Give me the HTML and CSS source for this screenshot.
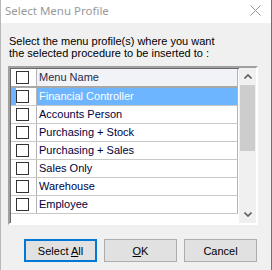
FILE: index.html
```html
<!DOCTYPE html>
<html>
<head>
<meta charset="utf-8">
<link rel="stylesheet" href="styles.css">
</head>
<body>
<div class="win">
  <div class="titlebar">
    <span class="title">Select Menu Profile</span>
    <svg class="close" width="11" height="11" viewBox="0 0 11 11"><path d="M0.5 0.5 L10.5 10.5 M10.5 0.5 L0.5 10.5" stroke="#999" stroke-width="1" fill="none"/></svg>
  </div>
  <div class="content">
    <p class="prompt">Select the menu profile(s) where you want<br>the selected procedure to be inserted to :</p>
    <div class="grid">
      <div class="table">
        <div class="row head"><div class="cbcell"><span class="cb"></span></div><div class="name">Menu Name</div></div>
        <div class="row sel"><div class="cbcell"><span class="cb"></span></div><div class="name">Financial Controller</div></div>
        <div class="row"><div class="cbcell"><span class="cb"></span></div><div class="name">Accounts Person</div></div>
        <div class="row"><div class="cbcell"><span class="cb"></span></div><div class="name">Purchasing + Stock</div></div>
        <div class="row"><div class="cbcell"><span class="cb"></span></div><div class="name">Purchasing + Sales</div></div>
        <div class="row"><div class="cbcell"><span class="cb"></span></div><div class="name">Sales Only</div></div>
        <div class="row"><div class="cbcell"><span class="cb"></span></div><div class="name">Warehouse</div></div>
        <div class="row"><div class="cbcell"><span class="cb"></span></div><div class="name">Employee</div></div>
      </div>
      <div class="scrollbar">
        <div class="arrow"><svg width="8" height="5" viewBox="0 0 8 5"><path d="M0.5 4.5 L4 1 L7.5 4.5" stroke="#606060" stroke-width="1.6" fill="none"/></svg></div>
        <div class="track"><div class="thumb"></div></div>
        <div class="arrow"><svg width="8" height="5" viewBox="0 0 8 5"><path d="M0.5 0.5 L4 4 L7.5 0.5" stroke="#606060" stroke-width="1.6" fill="none"/></svg></div>
      </div>
    </div>
    <div class="buttons">
      <button class="btn focus">Select <u>A</u>ll</button>
      <button class="btn"><u>O</u>K</button>
      <button class="btn">Cancel</button>
    </div>
  </div>
</div>
</body>
</html>
```

FILE: styles.css
```css
* { box-sizing: border-box; }
html, body { margin: 0; padding: 0; }
body { width: 272px; height: 270px; overflow: hidden; background: #f0f0f0; font-family: "Liberation Sans", Arial, sans-serif; font-size: 11px; }
.win { width: 272px; height: 270px; display: flex; flex-direction: column; border-right: 1px solid #707070; border-left: 1px solid #b8b8b8; background: #f0f0f0; }
.titlebar { height: 23px; background: #fff; display: flex; align-items: center; justify-content: space-between; padding: 0 10px 0 4px; flex: none; }
.title { font-family: "Noto Sans", "Open Sans", sans-serif; font-size: 11.5px; color: #999; line-height: 23px; padding-bottom: 2px; }
.close { display: block; margin-top: -3px; }
.content { flex: 1; padding: 12px 0 0 7px; display: flex; flex-direction: column; }
.prompt { margin: 0; line-height: 12px; color: #000; padding-left: 1px; }
.grid { margin-top: 7px; width: 250px; height: 159px; display: flex; border-style: solid; border-width: 2px; border-color: #a0a0a0 #fff #fff #a0a0a0; box-shadow: inset 1px 1px 0 #696969; background: #fff; }
.table { width: 228px; display: flex; flex-direction: column; padding-top: 1px; padding-left: 1px; }
.row { display: flex; height: 18px; border-bottom: 1px solid #c8c8c8; border-right: 1px solid #b4b4b4; color: #000040; }
.row.head { height: 19px; border-bottom: 2px solid #a8a8a8; color: #2a2a4a; }
.row.head .name { background: #f1f3f7; }
.cbcell { width: 26px; flex: none; border-right: 1px solid #b4b4b4; display: flex; align-items: center; padding-left: 5px; background: #fff; }
.cb { width: 13px; height: 13px; border: 1px solid #333; background: #fff; display: block; }
.name { flex: 1; padding-left: 2px; line-height: 17px; white-space: nowrap; }
.row.sel .name { background: #6eb5ff; color: #fff; }
.row.sel .cbcell { background: linear-gradient(to right, #6eb5ff 5px, #fff 5px); }
.scrollbar { width: 17px; margin-left: 1px; display: flex; flex-direction: column; background: #f0f0f0; }
.arrow { height: 17px; flex: none; display: flex; align-items: center; justify-content: center; }
.arrow svg { display: block; }
.track { flex: 1; padding: 0 1px; }
.thumb { height: 66px; background: #cdcdcd; }
.buttons { display: flex; justify-content: flex-end; gap: 7px; margin-top: 14px; padding-right: 14px; }
.btn { width: 73px; height: 23px; background: #e1e1e1; border: 1px solid #adadad; font-family: "Liberation Sans", Arial, sans-serif; font-size: 11px; color: #000; padding: 0; margin: 0; }
.btn.focus { border: 2px solid #0078d7; }
u { text-decoration: underline; }
```
